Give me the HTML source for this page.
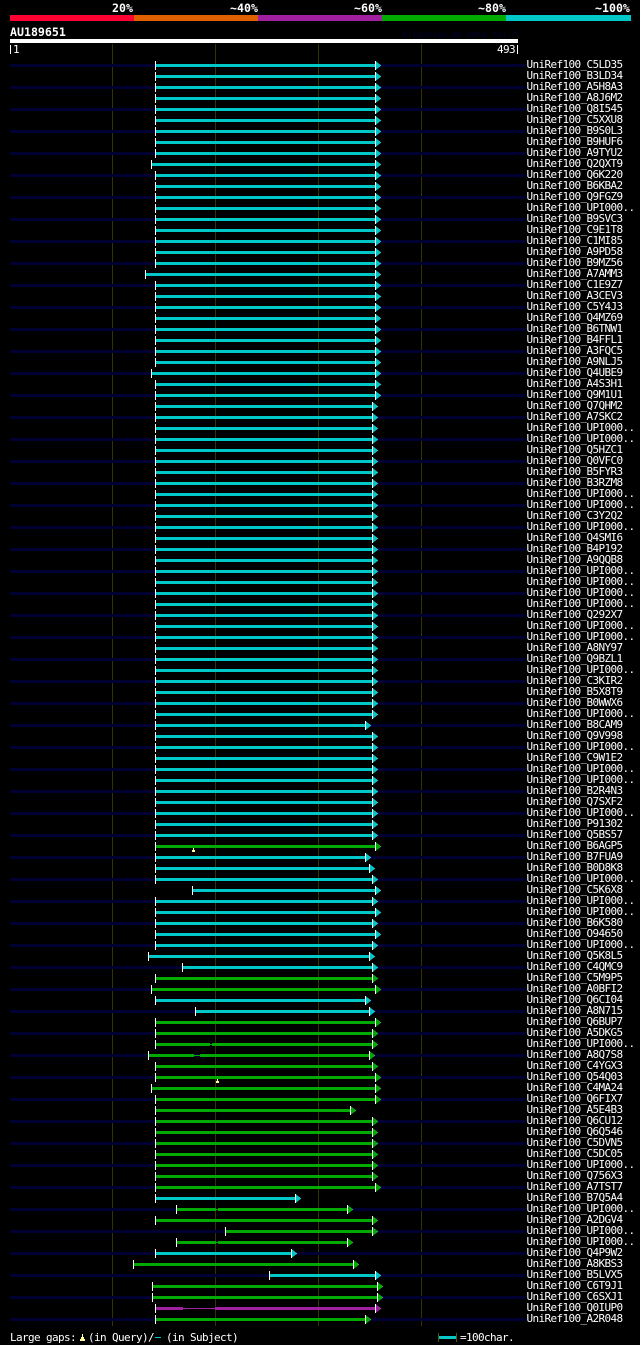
<!DOCTYPE html>
<html><head><meta charset="utf-8"><style>
html,body{margin:0;padding:0;background:#000;width:640px;height:1345px;overflow:hidden}
svg{position:absolute;left:0;top:0}
.t{position:absolute;margin:0;color:#fff;font-family:"DejaVu Sans Mono",monospace;font-size:11px;letter-spacing:-.62px;line-height:11px;white-space:pre}
.b{font-weight:bold;font-size:11.6px;letter-spacing:-.0px;line-height:12px}
.c{fill:#00c8c8}.g{fill:#00aa00}.p{fill:#a020a0}
</style></head><body>
<svg width="640" height="1345" viewBox="0 0 640 1345" xmlns="http://www.w3.org/2000/svg" shape-rendering="crispEdges">
<defs>
<pattern id="n" patternUnits="userSpaceOnUse" x="0" y="64" width="10" height="22"><rect width="10" height="3" fill="#000033"/></pattern>
<rect id="t" x="0" y="-3" width="1" height="9" fill="#fff"/>
<g id="ac" shape-rendering="auto"><path d="M0-3L6.2 1.5 0 6z" fill="#fff"/><rect x="0" y="-3" width="1" height="9" fill="#fff"/><path d="M1-2.6L5.9 1.5 1 5.6z" fill="#00c8c8"/></g>
<g id="ag" shape-rendering="auto"><path d="M0-3L6.2 1.5 0 6z" fill="#fff"/><rect x="0" y="-3" width="1" height="9" fill="#fff"/><path d="M1-2.6L5.9 1.5 1 5.6z" fill="#00aa00"/></g>
<g id="ap" shape-rendering="auto"><path d="M0-3L6.2 1.5 0 6z" fill="#fff"/><rect x="0" y="-3" width="1" height="9" fill="#fff"/><path d="M1-2.6L5.9 1.5 1 5.6z" fill="#a020a0"/></g>
<g id="A"><rect class="c" x="156" width="219" height="3"/><use href="#t" x="155"/><use href="#ac" x="375"/></g>
<g id="B"><rect class="c" x="156" width="216" height="3"/><use href="#t" x="155"/><use href="#ac" x="372"/></g>
<g id="G"><rect class="g" x="156" width="216" height="3"/><use href="#t" x="155"/><use href="#ag" x="372"/></g>
<g id="H"><rect class="g" x="156" width="219" height="3"/><use href="#t" x="155"/><use href="#ag" x="375"/></g>
</defs>
<rect x="10" y="15" width="124" height="6" fill="#ff0033"/>
<rect x="134" y="15" width="124" height="6" fill="#e06000"/>
<rect x="258" y="15" width="124" height="6" fill="#a020a0"/>
<rect x="382" y="15" width="124" height="6" fill="#00aa00"/>
<rect x="506" y="15" width="125" height="6" fill="#00c8c8"/>
<rect x="10" y="39" width="508" height="4" fill="#fff"/>
<rect x="10" y="45" width="1" height="9" fill="#fff"/>
<rect x="517" y="45" width="1" height="9" fill="#fff"/>
<g fill="#333300"><rect x="112" y="44" width="1" height="1282"/><rect x="215" y="44" width="1" height="1282"/><rect x="318" y="44" width="1" height="1282"/><rect x="421" y="44" width="1" height="1282"/></g>
<rect x="10" y="64" width="516" height="1257" fill="url(#n)"/>

<use href="#A" y="64"/><use href="#A" y="75"/><use href="#A" y="86"/><use href="#A" y="97"/><use href="#A" y="108"/><use href="#A" y="119"/><use href="#A" y="130"/><use href="#A" y="141"/><use href="#A" y="152"/>
<rect class="c" x="152" y="163" width="223" height="3"/><use href="#t" x="151" y="163"/><use href="#ac" x="375" y="163"/>
<use href="#A" y="174"/><use href="#A" y="185"/><use href="#A" y="196"/><use href="#A" y="207"/><use href="#A" y="218"/><use href="#A" y="229"/><use href="#A" y="240"/><use href="#A" y="251"/><use href="#A" y="262"/>
<rect class="c" x="146" y="273" width="229" height="3"/><use href="#t" x="145" y="273"/><use href="#ac" x="375" y="273"/>
<use href="#A" y="284"/><use href="#A" y="295"/><use href="#A" y="306"/><use href="#A" y="317"/><use href="#A" y="328"/><use href="#A" y="339"/><use href="#A" y="350"/><use href="#A" y="361"/>
<rect class="c" x="152" y="372" width="223" height="3"/><use href="#t" x="151" y="372"/><use href="#ac" x="375" y="372"/>
<use href="#A" y="383"/><use href="#A" y="394"/>
<use href="#B" y="405"/><use href="#B" y="416"/><use href="#B" y="427"/><use href="#B" y="438"/><use href="#B" y="449"/><use href="#B" y="460"/><use href="#B" y="471"/><use href="#B" y="482"/><use href="#B" y="493"/><use href="#B" y="504"/><use href="#B" y="515"/><use href="#B" y="526"/><use href="#B" y="537"/><use href="#B" y="548"/><use href="#B" y="559"/><use href="#B" y="570"/><use href="#B" y="581"/><use href="#B" y="592"/><use href="#B" y="603"/><use href="#B" y="614"/><use href="#B" y="625"/><use href="#B" y="636"/><use href="#B" y="647"/><use href="#B" y="658"/><use href="#B" y="669"/><use href="#B" y="680"/><use href="#B" y="691"/><use href="#B" y="702"/><use href="#B" y="713"/>
<rect class="c" x="156" y="724" width="209" height="3"/><use href="#t" x="155" y="724"/><use href="#ac" x="365" y="724"/>
<use href="#B" y="735"/><use href="#B" y="746"/><use href="#B" y="757"/><use href="#B" y="768"/><use href="#B" y="779"/><use href="#B" y="790"/><use href="#B" y="801"/><use href="#B" y="812"/><use href="#B" y="823"/><use href="#B" y="834"/>
<use href="#H" y="845"/><rect x="193" y="848" width="1" height="2" fill="#ffff99"/><rect x="192" y="850" width="3" height="2" fill="#ffff99"/>
<rect class="c" x="156" y="856" width="209" height="3"/><use href="#t" x="155" y="856"/><use href="#ac" x="365" y="856"/>
<rect class="c" x="156" y="867" width="213" height="3"/><use href="#t" x="155" y="867"/><use href="#ac" x="369" y="867"/>
<use href="#B" y="878"/>
<rect class="c" x="193" y="889" width="182" height="3"/><use href="#t" x="192" y="889"/><use href="#ac" x="375" y="889"/>
<use href="#B" y="900"/><use href="#A" y="911"/><use href="#B" y="922"/><use href="#A" y="933"/><use href="#B" y="944"/>
<rect class="c" x="149" y="955" width="220" height="3"/><use href="#t" x="148" y="955"/><use href="#ac" x="369" y="955"/>
<rect class="c" x="183" y="966" width="189" height="3"/><use href="#t" x="182" y="966"/><use href="#ac" x="372" y="966"/>
<use href="#G" y="977"/>
<rect class="g" x="152" y="988" width="223" height="3"/><use href="#t" x="151" y="988"/><use href="#ag" x="375" y="988"/>
<rect class="c" x="156" y="999" width="209" height="3"/><use href="#t" x="155" y="999"/><use href="#ac" x="365" y="999"/>
<rect class="c" x="196" y="1010" width="173" height="3"/><use href="#t" x="195" y="1010"/><use href="#ac" x="369" y="1010"/>
<use href="#H" y="1021"/><use href="#G" y="1032"/>
<rect class="g" x="156" y="1043" width="54" height="3"/><rect class="g" x="210" y="1044" width="2" height="1"/><rect class="g" x="212" y="1043" width="160" height="3"/><use href="#t" x="155" y="1043"/><use href="#ag" x="372" y="1043"/>
<rect class="g" x="149" y="1054" width="45" height="3"/><rect class="g" x="194" y="1055" width="6" height="1"/><rect class="g" x="200" y="1054" width="169" height="3"/><use href="#t" x="148" y="1054"/><use href="#ag" x="369" y="1054"/>
<use href="#G" y="1065"/>
<use href="#H" y="1076"/><rect x="217" y="1079" width="1" height="2" fill="#ffff99"/><rect x="216" y="1081" width="3" height="2" fill="#ffff99"/>
<rect class="g" x="152" y="1087" width="223" height="3"/><use href="#t" x="151" y="1087"/><use href="#ag" x="375" y="1087"/>
<use href="#H" y="1098"/>
<rect class="g" x="156" y="1109" width="194" height="3"/><use href="#t" x="155" y="1109"/><use href="#ag" x="350" y="1109"/>
<use href="#G" y="1120"/><use href="#G" y="1131"/><use href="#G" y="1142"/><use href="#G" y="1153"/><use href="#G" y="1164"/><use href="#G" y="1175"/>
<use href="#H" y="1186"/>
<rect class="c" x="156" y="1197" width="139" height="3"/><use href="#t" x="155" y="1197"/><use href="#ac" x="295" y="1197"/>
<rect class="g" x="177" y="1208" width="39" height="3"/><rect class="g" x="216" y="1209" width="2" height="1"/><rect class="g" x="218" y="1208" width="129" height="3"/><use href="#t" x="176" y="1208"/><use href="#ag" x="347" y="1208"/>
<use href="#G" y="1219"/>
<rect class="g" x="226" y="1230" width="146" height="3"/><use href="#t" x="225" y="1230"/><use href="#ag" x="372" y="1230"/>
<rect class="g" x="177" y="1241" width="39" height="3"/><rect class="g" x="216" y="1242" width="2" height="1"/><rect class="g" x="218" y="1241" width="129" height="3"/><use href="#t" x="176" y="1241"/><use href="#ag" x="347" y="1241"/>
<rect class="c" x="156" y="1252" width="135" height="3"/><use href="#t" x="155" y="1252"/><use href="#ac" x="291" y="1252"/>
<rect class="g" x="134" y="1263" width="219" height="3"/><use href="#t" x="133" y="1263"/><use href="#ag" x="353" y="1263"/>
<rect class="c" x="270" y="1274" width="105" height="3"/><use href="#t" x="269" y="1274"/><use href="#ac" x="375" y="1274"/>
<rect class="g" x="153" y="1285" width="224" height="3"/><use href="#t" x="152" y="1285"/><use href="#ag" x="377" y="1285"/>
<rect class="g" x="153" y="1296" width="224" height="3"/><use href="#t" x="152" y="1296"/><use href="#ag" x="377" y="1296"/>
<rect class="p" x="156" y="1307" width="27" height="3"/><rect class="p" x="183" y="1308" width="32" height="1"/><rect class="p" x="215" y="1307" width="160" height="3"/><use href="#t" x="155" y="1307"/><use href="#ap" x="375" y="1307"/>
<rect class="g" x="156" y="1318" width="209" height="3"/><use href="#t" x="155" y="1318"/><use href="#ag" x="365" y="1318"/>

<rect x="82" y="1334" width="1" height="3" fill="#ffff99"/><rect x="81" y="1337" width="3" height="2" fill="#ffff99"/><rect x="80" y="1339" width="5" height="2" fill="#ffff99"/>
<rect x="155" y="1337" width="6" height="1" fill="#00c8c8"/>
<rect x="438" y="1333" width="1" height="9" fill="#555500"/><rect x="456" y="1333" width="1" height="9" fill="#555500"/><rect x="439" y="1336" width="17" height="3" fill="#00c8c8"/>
<text x="402" y="37" font-family="Liberation Mono,monospace" font-size="8.3" fill="#000033">AlignView.pm Beta rel.7</text>
</svg>
<div class="t b" style="left:112px;top:2px">20%</div>
<div class="t b" style="left:230px;top:2px">~40%</div>
<div class="t b" style="left:354px;top:2px">~60%</div>
<div class="t b" style="left:478px;top:2px">~80%</div>
<div class="t b" style="left:595px;top:2px">~100%</div>
<div class="t b" style="left:10px;top:26px">AU189651</div>
<div class="t" style="left:13px;top:44px">1</div>
<div class="t" style="left:497px;top:44px">493</div>
<pre class="t" style="left:526.5px;top:59px">UniRef100_C5LD35
UniRef100_B3LD34
UniRef100_A5H8A3
UniRef100_A8J6M2
UniRef100_Q8I545
UniRef100_C5XXU8
UniRef100_B9S0L3
UniRef100_B9HUF6
UniRef100_A9TYU2
UniRef100_Q2QXT9
UniRef100_Q6K220
UniRef100_B6KBA2
UniRef100_Q9FGZ9
UniRef100_UPI000..
UniRef100_B9SVC3
UniRef100_C9E1T8
UniRef100_C1MI85
UniRef100_A9PD58
UniRef100_B9MZ56
UniRef100_A7AMM3
UniRef100_C1E9Z7
UniRef100_A3CEV3
UniRef100_C5Y4J3
UniRef100_Q4MZ69
UniRef100_B6TNW1
UniRef100_B4FFL1
UniRef100_A3FQC5
UniRef100_A9NLJ5
UniRef100_Q4UBE9
UniRef100_A4S3H1
UniRef100_Q9M1U1
UniRef100_Q7QHM2
UniRef100_A7SKC2
UniRef100_UPI000..
UniRef100_UPI000..
UniRef100_Q5HZC1
UniRef100_Q0VFC0
UniRef100_B5FYR3
UniRef100_B3RZM8
UniRef100_UPI000..
UniRef100_UPI000..
UniRef100_C3Y2Q2
UniRef100_UPI000..
UniRef100_Q4SMI6
UniRef100_B4P192
UniRef100_A9QQB8
UniRef100_UPI000..
UniRef100_UPI000..
UniRef100_UPI000..
UniRef100_UPI000..
UniRef100_Q292X7
UniRef100_UPI000..
UniRef100_UPI000..
UniRef100_A8NY97
UniRef100_Q9BZL1
UniRef100_UPI000..
UniRef100_C3KIR2
UniRef100_B5X8T9
UniRef100_B0WWX6
UniRef100_UPI000..
UniRef100_B8CAM9
UniRef100_Q9V998
UniRef100_UPI000..
UniRef100_C9W1E2
UniRef100_UPI000..
UniRef100_UPI000..
UniRef100_B2R4N3
UniRef100_Q7SXF2
UniRef100_UPI000..
UniRef100_P91302
UniRef100_Q5BS57
UniRef100_B6AGP5
UniRef100_B7FUA9
UniRef100_B0D8K8
UniRef100_UPI000..
UniRef100_C5K6X8
UniRef100_UPI000..
UniRef100_UPI000..
UniRef100_B6K580
UniRef100_O94650
UniRef100_UPI000..
UniRef100_Q5K8L5
UniRef100_C4QMC9
UniRef100_C5M9P5
UniRef100_A0BFI2
UniRef100_Q6CI04
UniRef100_A8N715
UniRef100_Q6BUP7
UniRef100_A5DKG5
UniRef100_UPI000..
UniRef100_A8Q7S8
UniRef100_C4YGX3
UniRef100_Q54Q03
UniRef100_C4MA24
UniRef100_Q6FIX7
UniRef100_A5E4B3
UniRef100_Q6CU12
UniRef100_Q6Q546
UniRef100_C5DVN5
UniRef100_C5DC05
UniRef100_UPI000..
UniRef100_Q756X3
UniRef100_A7TST7
UniRef100_B7Q5A4
UniRef100_UPI000..
UniRef100_A2DGV4
UniRef100_UPI000..
UniRef100_UPI000..
UniRef100_Q4P9W2
UniRef100_A8KBS3
UniRef100_B5LVX5
UniRef100_C6T9J1
UniRef100_C6SXJ1
UniRef100_Q0IUP0
UniRef100_A2R048</pre>
<div class="t" style="left:10px;top:1332px">Large gaps:</div>
<div class="t" style="left:88px;top:1332px">(in Query)/</div>
<div class="t" style="left:166px;top:1332px">(in Subject)</div>
<div class="t" style="left:460px;top:1332px">=100char.</div>
</body></html>
